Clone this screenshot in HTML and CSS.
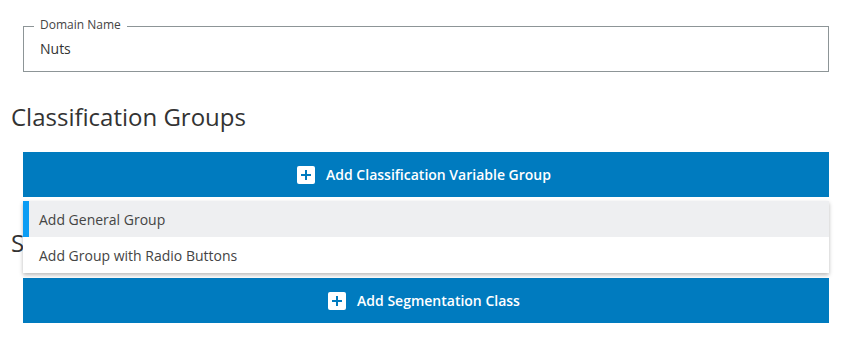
FILE: index.html
```html
<!DOCTYPE html>
<html>
<head>
<meta charset="utf-8">
<link rel="stylesheet" href="styles.css">
</head>
<body>
<div class="page">
  <div class="field">
    <span class="legend">Domain Name</span>
    <div class="value">Nuts</div>
  </div>
  <h2 class="heading">Classification Groups</h2>
  <div class="btn-wrap">
    <button class="btn">
      <svg class="plus" width="18" height="18" viewBox="0 0 18 18"><rect x="0" y="0" width="18" height="18" rx="2" fill="#fff"/><path d="M9 4v10M4 9h10" stroke="#007bbf" stroke-width="2"/></svg>
      <span>Add Classification Variable Group</span>
    </button>
    <ul class="menu">
      <li class="item active">Add General Group</li>
      <li class="item">Add Group with Radio Buttons</li>
    </ul>
  </div>
  <h2 class="heading second">Segmentation Classes</h2>
  <button class="btn">
    <svg class="plus" width="18" height="18" viewBox="0 0 18 18"><rect x="0" y="0" width="18" height="18" rx="2" fill="#fff"/><path d="M9 4v10M4 9h10" stroke="#007bbf" stroke-width="2"/></svg>
    <span>Add Segmentation Class</span>
  </button>
</div>
</body>
</html>
```
FILE: styles.css
```css
html, body {
  margin: 0;
  padding: 0;
  background: #fff;
}
body {
  font-family: "Open Sans", "Liberation Sans", sans-serif;
  color: #333;
}
.page {
  padding: 26px 20px 0 11px;
}
.field {
  position: relative;
  margin-left: 12px;
  border: 1px solid #8d9597;
  padding: 12px 16px;
}
.legend {
  position: absolute;
  top: -10px;
  left: 10px;
  padding: 0 6px;
  background: #fff;
  font-size: 12px;
  line-height: 16px;
  color: #444;
}
.value {
  font-size: 14px;
  line-height: 20px;
  color: #333;
}
.heading {
  margin: 29px 0 19px 0;
  font-size: 24px;
  line-height: 32px;
  font-weight: 400;
  color: #333;
}
.heading.second {
  margin-top: 30px;
}
.btn-wrap {
  position: relative;
}
.btn {
  display: flex;
  align-items: center;
  justify-content: center;
  gap: 11px;
  width: calc(100% - 12px);
  margin-left: 12px;
  height: 45px;
  border: 0;
  padding: 0 4px 0 0;
  background: #007bbf;
  color: #fff;
  font-family: "Open Sans", "Liberation Sans", sans-serif;
  font-size: 14px;
  font-weight: 600;
}
.plus {
  display: block;
}
.menu {
  position: absolute;
  top: 49px;
  left: 12px;
  right: 0;
  margin: 0;
  padding: 0;
  list-style: none;
  background: #fff;
  box-shadow: 0 2px 4px rgba(0, 0, 0, 0.28);
  z-index: 2;
}
.item {
  height: 36px;
  line-height: 37px;
  padding-left: 16px;
  font-size: 14px;
  color: #444;
}
.item.active {
  background: #eeeff1;
  box-shadow: inset 6px 0 0 #0b9df4;
}
```
